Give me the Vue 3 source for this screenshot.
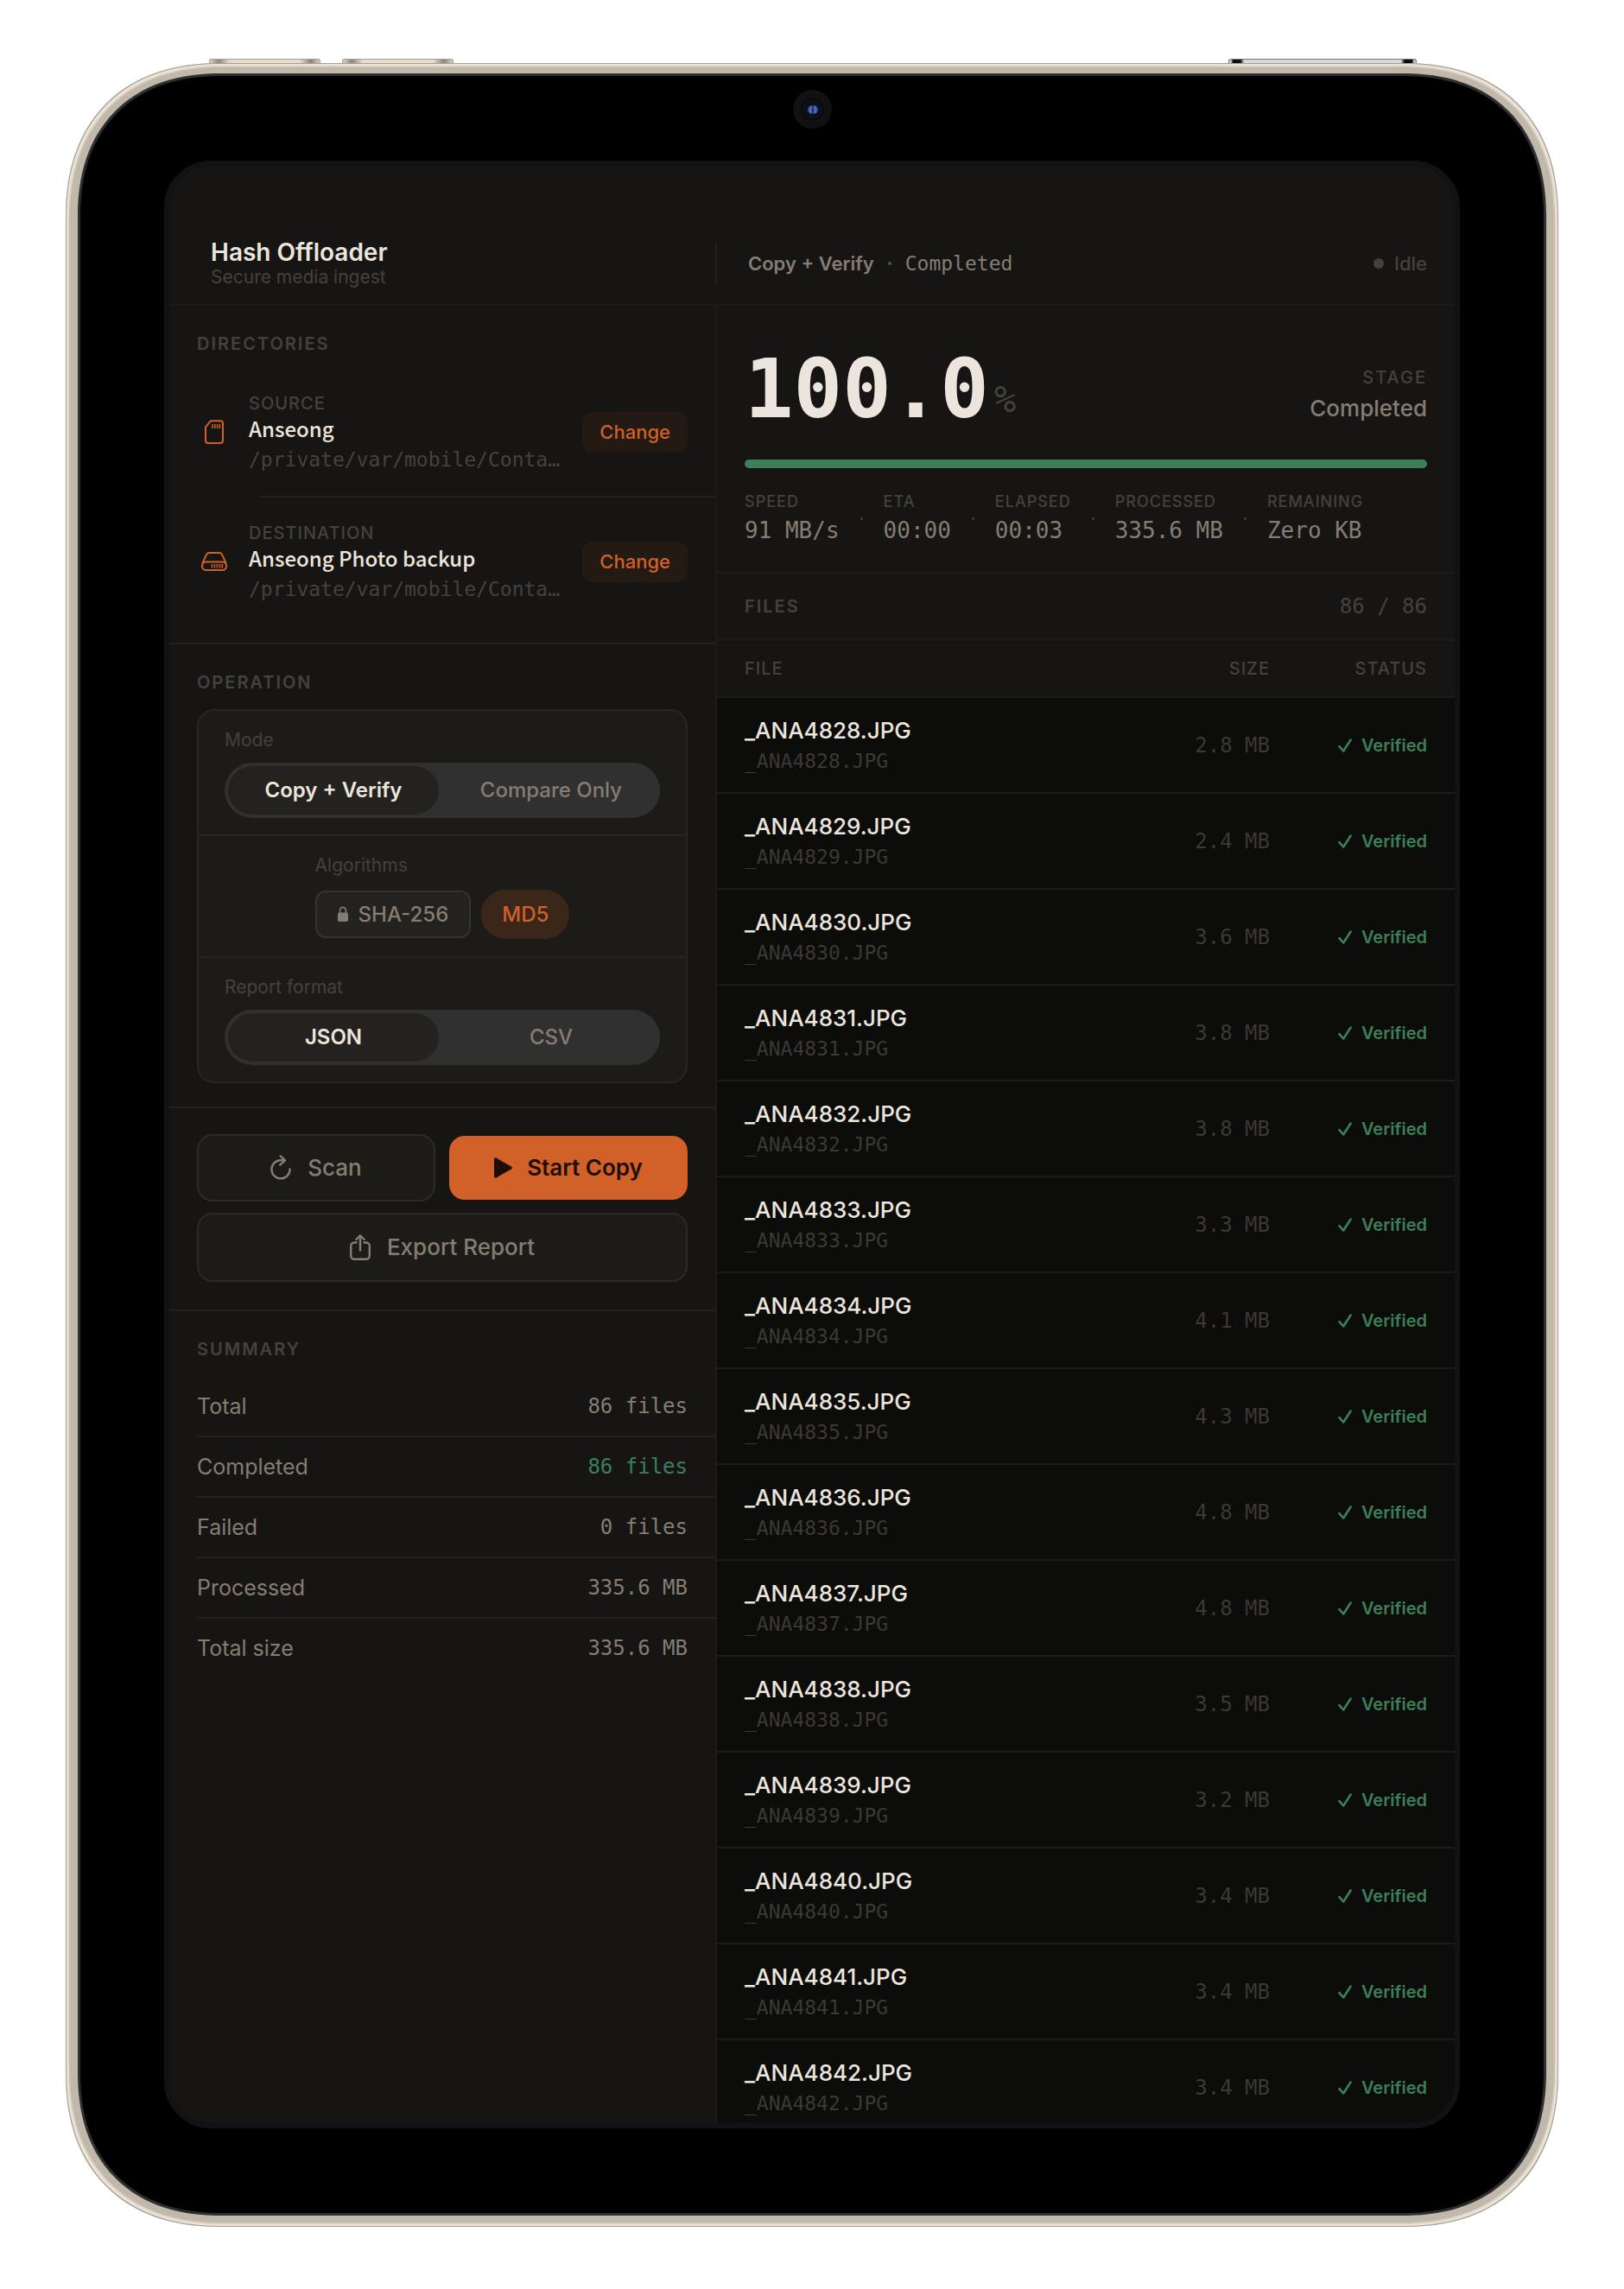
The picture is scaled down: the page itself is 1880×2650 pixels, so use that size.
<script setup>
import { ref } from 'vue'

const directories = [
  { id: 'source', label: 'SOURCE', name: 'Anseong', path: '/private/var/mobile/Conta…', icon: 'card' },
  { id: 'destination', label: 'DESTINATION', name: 'Anseong Photo backup', path: '/private/var/mobile/Conta…', icon: 'drive' },
]

const mode = ref('Copy + Verify')
const format = ref('JSON')
const md5 = ref(true)

const summary = [
  { label: 'Total', value: '86 files' },
  { label: 'Completed', value: '86 files', good: true },
  { label: 'Failed', value: '0 files' },
  { label: 'Processed', value: '335.6 MB' },
  { label: 'Total size', value: '335.6 MB' },
]

const progress = 100

const stats = [
  { label: 'SPEED', value: '91 MB/s' },
  { label: 'ETA', value: '00:00' },
  { label: 'ELAPSED', value: '00:03' },
  { label: 'PROCESSED', value: '335.6 MB' },
  { label: 'REMAINING', value: 'Zero KB' },
]

const sizes = ['2.8', '2.4', '3.6', '3.8', '3.8', '3.3', '4.1', '4.3', '4.8', '4.8', '3.5', '3.2', '3.4', '3.4', '3.4']
const files = sizes.map((size, i) => ({ name: `_ANA${4828 + i}.JPG`, size: `${size} MB` }))
</script>

<template>
  <div class="page">
    <div class="device">
      <span class="key key-up"></span>
      <span class="key key-down"></span>
      <span class="key key-power"></span>
      <div class="bezel">
        <span class="camera"><span class="lens"></span></span>
        <div class="screen">
          <header class="topbar">
            <div class="brand">
              <div>
                <h1>Hash Offloader</h1>
                <p>Secure media ingest</p>
              </div>
              <span class="rule"></span>
            </div>
            <div class="session">
              <strong>Copy + Verify</strong>
              <span class="speck"></span>
              <span class="mono small">Completed</span>
              <span class="state"><span class="bulb"></span>Idle</span>
            </div>
          </header>

          <div class="body">
            <aside class="sidebar">
              <section class="directories">
                <h2>DIRECTORIES</h2>
                <div v-for="dir in directories" :key="dir.id" class="directory">
                  <span class="dir-icon">
                    <svg v-if="dir.icon === 'card'" width="22" height="28" viewBox="0 0 22 28" fill="none" stroke="currentColor" stroke-width="2" stroke-linejoin="round">
                      <path d="M8.2 1.2H18a3 3 0 0 1 3 3V24a3 3 0 0 1-3 3H4a3 3 0 0 1-3-3V9.4a3 3 0 0 1 .9-2.1l4.2-5.2a3 3 0 0 1 2.100-.9Z" />
                      <path stroke-width="1.500" d="M9 5v5M11.800 5v5M14.600 5v5M17.400 5v5" />
                    </svg>
                    <svg v-else width="30" height="22" viewBox="0 0 30 22" fill="none" stroke="currentColor" stroke-width="2" stroke-linejoin="round">
                      <path d="M1.400 13.200 5.800 3.400A4 4 0 0 1 9.400 1H20.600a4 4 0 0 1 3.600 2.400l4.400 9.800" />
                      <rect x="1" y="11.500" width="28" height="9.500" rx="4.500" />
                      <path stroke-width="1.500" d="M12.500 14v4.500M15.500 14v4.500M18.500 14v4.500M21.500 14v4.500M24.300 14v4.500" />
                    </svg>
                  </span>
                  <div class="dir-text">
                    <span class="dir-label">{{ dir.label }}</span>
                    <span class="dir-name">{{ dir.name }}</span>
                    <span class="dir-path mono small">{{ dir.path }}</span>
                  </div>
                  <button type="button" class="change">Change</button>
                </div>
              </section>

              <section class="operation">
                <h2>OPERATION</h2>
                <div class="card">
                  <fieldset class="option">
                    <legend>Mode</legend>
                    <div class="segments">
                      <label v-for="m in ['Copy + Verify', 'Compare Only']" :key="m" :class="{ on: mode === m }">
                        <input v-model="mode" type="radio" name="mode" :value="m" />{{ m }}
                      </label>
                    </div>
                  </fieldset>
                  <div class="option algorithms">
                    <div>
                      <span class="option-label">Algorithms</span>
                      <div class="chips">
                        <span class="chip locked">
                          <svg width="12" height="18" viewBox="0 0 12 18">
                            <path d="M2.600 8V4.800a3.400 3.400 0 0 1 6.800 0V8" fill="none" stroke="currentColor" stroke-width="1.600" />
                            <rect x="0" y="7.500" width="12" height="10.500" rx="2" fill="currentColor" />
                          </svg>
                          SHA-256
                        </span>
                        <button type="button" class="chip pill" :aria-pressed="md5" @click="md5 = !md5">MD5</button>
                      </div>
                    </div>
                  </div>
                  <fieldset class="option">
                    <legend>Report format</legend>
                    <div class="segments">
                      <label v-for="f in ['JSON', 'CSV']" :key="f" :class="{ on: format === f }">
                        <input v-model="format" type="radio" name="format" :value="f" />{{ f }}
                      </label>
                    </div>
                  </fieldset>
                </div>
              </section>

              <section class="actions">
                <div class="pair">
                  <button type="button" class="action scan">
                    <svg width="24" height="30" viewBox="0 0 24 30" fill="none" stroke="currentColor" stroke-width="2.400" stroke-linecap="round" stroke-linejoin="round">
                      <path d="M22.600 16.500A10.600 10.600 0 1 1 12 6.200h4.600" />
                      <path d="m11.800 1.400 5.200 4.900-5.800 5.400" />
                    </svg>
                    Scan
                  </button>
                  <button type="button" class="action start">
                    <svg width="21" height="24" viewBox="0 0 21 24" fill="currentColor">
                      <path d="M0 2.200C0 .6 1.400-.1 2.800.7l17 9.800c1.500.9 1.500 2.100 0 3l-17 9.800C1.400 24.100 0 23.400 0 21.800Z" />
                    </svg>
                    Start Copy
                  </button>
                </div>
                <button type="button" class="action export">
                  <svg width="24" height="30" viewBox="0 0 24 30" fill="none" stroke="currentColor" stroke-width="2.400" stroke-linecap="round" stroke-linejoin="round">
                    <path d="M7.500 9.500H5.200a4 4 0 0 0-4 4v11.300a4 4 0 0 0 4 4h13.600a4 4 0 0 0 4-4V13.500a4 4 0 0 0-4-4h-2.300" />
                    <path d="M12 18.500V1.800M7.400 6 12 1.400 16.600 6" />
                  </svg>
                  Export Report
                </button>
              </section>

              <section class="summary">
                <h2>SUMMARY</h2>
                <dl>
                  <div v-for="row in summary" :key="row.label">
                    <dt>{{ row.label }}</dt>
                    <dd class="mono" :class="{ good: row.good }">{{ row.value }}</dd>
                  </div>
                </dl>
              </section>
            </aside>

            <main class="main">
              <section class="status">
                <div class="hero">
                  <p class="percent mono">{{ progress.toFixed(1) }}<span>%</span></p>
                  <div class="stage">
                    <span class="stage-label">STAGE</span>
                    <span class="stage-value">Completed</span>
                  </div>
                </div>
                <progress :value="progress" max="100" aria-label="Copy progress"></progress>
                <div class="stats">
                  <template v-for="(stat, i) in stats" :key="stat.label">
                    <span v-if="i" class="tick"></span>
                    <div>
                      <span class="stat-label">{{ stat.label }}</span>
                      <span class="stat-value mono">{{ stat.value }}</span>
                    </div>
                  </template>
                </div>
              </section>

              <div class="files-bar">
                <h2>FILES</h2>
                <span class="mono">86 / 86</span>
              </div>

              <div class="files">
                <table>
                  <thead>
                    <tr>
                      <th scope="col">FILE</th>
                      <th scope="col" class="size">SIZE</th>
                      <th scope="col" class="result">STATUS</th>
                    </tr>
                  </thead>
                  <tbody>
                    <tr v-for="file in files" :key="file.name">
                      <td>
                        <span class="file-name">{{ file.name }}</span>
                        <span class="file-path mono small">{{ file.name }}</span>
                      </td>
                      <td class="size mono">{{ file.size }}</td>
                      <td class="result">
                        <span class="verified">
                          <svg width="16" height="16" viewBox="0 0 16 16" fill="none" stroke="currentColor" stroke-width="2.600" stroke-linecap="round" stroke-linejoin="round">
                            <path d="m1.400 9.200 4.800 5.300L14.600 1.500" />
                          </svg>
                          Verified
                        </span>
                      </td>
                    </tr>
                  </tbody>
                </table>
              </div>
            </main>
          </div>
        </div>
      </div>
    </div>
  </div>
</template>

<style>
body {
  background: #fff;
}
</style>

<style scoped>
* {
  box-sizing: border-box;
}

h1,
h2,
p,
dl,
dd,
fieldset,
legend {
  margin: 0;
  padding: 0;
  border: 0;
}

button {
  border: 0;
  font: inherit;
  cursor: pointer;
}

.page {
  padding: 73px 76px 72px;
  font-family: Inter, "Liberation Sans", sans-serif;
  color: #ece5dd;
}

.mono {
  font-family: "DejaVu Sans Mono", "Liberation Mono", monospace;
  font-size: 24px;
}

.small {
  font-size: 23px;
}

/* Device shell */
.device {
  position: relative;
  padding: 12px 14px 13px;
  border-radius: 162px;
  background: #c1b8aa;
  box-shadow:
    inset 0 0 0 1px #a79f92,
    inset 0 0 2px 4px #ebe3d8;
}

.bezel {
  position: relative;
  padding: 98px 97px;
  border: 3px solid #2c2e2f;
  border-radius: 148px;
  background: #000;
}

@supports (corner-shape: superellipse(1.2)) {
  .device {
    border-radius: 180px;
    corner-shape: superellipse(1.2);
  }

  .bezel {
    border-radius: 167px;
    corner-shape: superellipse(1.2);
  }
}

.key {
  position: absolute;
  top: -5px;
  width: 129px;
  height: 5px;
  border: 1px solid #a79f92;
  border-bottom: 0;
  border-radius: 3px 3px 0 0;
  background: linear-gradient(90deg, #d9d1c4, #8d8578 8%, #e6ddcf 18%, #e6ddcf 82%, #8d8578 92%, #d9d1c4);
}

.key-up {
  left: 166px;
}

.key-down {
  left: 320px;
}

.key-power {
  right: 164px;
  width: 218px;
  border-color: #77787a;
  background: linear-gradient(90deg, #ccc 1%, #0c0f12 2%, #0c0f12 6%, #dcdad8 8%, #dcdad8 92%, #0c0f12 94%, #0c0f12 98%, #ccc 99%);
}

.camera {
  position: absolute;
  top: 16px;
  left: 50%;
  display: grid;
  place-items: center;
  width: 45px;
  height: 45px;
  margin-left: -22px;
  border-radius: 50%;
  background: radial-gradient(circle, #0a0d14 0, #0b111b 11px, #05070a 12px, #111 14px);
}

.lens {
  width: 12px;
  height: 10px;
  border-radius: 50%;
  background: linear-gradient(90deg, #2c3f8f, #5573c4 30%, #1d2557 50%, #5573c4 70%, #2c3f8f);
}

.screen {
  display: flex;
  flex-direction: column;
  box-sizing: content-box;
  aspect-ratio: 744 / 1133;
  min-height: 0;
  border: 6px solid #111213;
  border-radius: 54px;
  background: #161513;
  overflow: hidden;
}

/* Top bar */
.topbar,
.body {
  display: grid;
  grid-template-columns: minmax(0, 634fr) minmax(0, 854fr);
}

.topbar {
  flex: none;
  align-items: center;
  padding: 84px 0 18px;
  border-bottom: 2px solid #1c1b19;
}

.brand {
  display: flex;
  align-items: center;
  justify-content: space-between;
  padding-left: 48px;
}

h1 {
  font-size: 28px;
  font-weight: 600;
  line-height: 32px;
}

.brand p {
  font-size: 21px;
  line-height: 26px;
  color: #45423c;
}

.rule {
  width: 2px;
  height: 48px;
  background: #22211f;
}

.session {
  display: flex;
  align-items: center;
  gap: 16px;
  padding: 0 32px 0 36px;
  color: #857d73;
}

.session strong {
  font-size: 22px;
  font-weight: 600;
}

.speck {
  width: 4px;
  height: 4px;
  border-radius: 50%;
  background: #57534c;
}

.state {
  display: flex;
  align-items: center;
  gap: 12px;
  margin-left: auto;
  font-size: 22px;
  font-weight: 500;
  color: #45423c;
}

.bulb {
  width: 12px;
  height: 12px;
  border-radius: 50%;
  background: #45423c;
}

.body {
  flex: 1;
  min-height: 0;
}

/* Sidebar */
.sidebar {
  min-width: 0;
  border-right: 2px solid #1c1b19;
}

.sidebar section {
  padding: 32px 32px 0;
  border-bottom: 2px solid #22211f;
}

.sidebar section.summary {
  border-bottom: 0;
}

h2 {
  font-size: 20px;
  font-weight: 600;
  line-height: 24px;
  letter-spacing: 2px;
  color: #45423c;
}

.sidebar section.directories {
  padding-bottom: 20px;
}

.directories h2 {
  margin-bottom: 16px;
}

.directory {
  display: flex;
  align-items: center;
  height: 148px;
}

.directory + .directory {
  position: relative;
  height: 150px;
  padding-top: 2px;
}

.directory + .directory::before {
  content: "";
  position: absolute;
  top: 0;
  left: 72px;
  right: -32px;
  height: 2px;
  background: #22211f;
}

.dir-icon {
  display: grid;
  place-items: center;
  width: 40px;
  color: #d16029;
}

.dir-text {
  flex: 1;
  display: flex;
  flex-direction: column;
  min-width: 0;
  padding: 0 12px 2px 20px;
}

.dir-label {
  font-size: 20px;
  font-weight: 500;
  line-height: 28px;
  letter-spacing: 1px;
  color: #45423c;
}

.dir-name {
  margin-bottom: 7px;
  font-family: "Noto Sans CJK KR", "Noto Sans", sans-serif;
  font-size: 24px;
  font-weight: 500;
  line-height: 30px;
}

.dir-path {
  line-height: 28px;
  white-space: nowrap;
  overflow: hidden;
  text-overflow: ellipsis;
  color: #45423c;
}

.change {
  padding: 0 20px;
  border-radius: 12px;
  background: #231a14;
  font-size: 22px;
  font-weight: 500;
  line-height: 47px;
  color: #d16029;
}

/* Operation card */
.sidebar section.operation {
  padding-bottom: 27px;
}

.card {
  margin-top: 19px;
  border: 2px solid #272622;
  border-radius: 20px;
  background: #1d1b17;
}

.option {
  min-width: 0;
  padding: 22px 30px 19px;
}

.option + .option {
  border-top: 2px solid #272622;
}

.option legend,
.option-label {
  display: block;
  float: left;
  width: 100%;
  margin-bottom: 14px;
  font-size: 21px;
  line-height: 24px;
  color: #45423c;
}

.segments {
  clear: both;
  display: flex;
  gap: 8px;
  padding: 4px;
  border-radius: 32px;
  background: #303030;
}

.segments label {
  flex: 1;
  border-radius: 28px;
  font-size: 24px;
  font-weight: 500;
  line-height: 56px;
  text-align: center;
  color: #857d73;
  cursor: pointer;
}

.segments label.on {
  background: #24221e;
  font-weight: 600;
  color: #ece5dd;
}

.segments input {
  position: absolute;
  opacity: 0;
  pointer-events: none;
}

.algorithms {
  display: flex;
  justify-content: center;
}

.chips {
  clear: both;
  display: flex;
  align-items: center;
  gap: 12px;
  min-height: 60px;
}

.chip {
  display: flex;
  align-items: center;
  gap: 12px;
  padding: 0 24px;
  font-size: 24px;
  font-weight: 500;
  line-height: 51px;
}

.locked {
  border: 2px solid #343330;
  border-radius: 12px;
  background: #24221e;
  color: #857d73;
}

.pill {
  border-radius: 28px;
  background: #3b261a;
  line-height: 57px;
  color: #d16029;
}

/* Actions */
.sidebar section.actions {
  padding: 30px 32px 32px;
}

.pair {
  display: grid;
  grid-template-columns: 1fr 1fr;
  align-items: center;
  gap: 16px;
  margin-bottom: 13px;
}

.action {
  display: flex;
  align-items: center;
  justify-content: center;
  gap: 19px;
  width: 100%;
  border: 2px solid #2b2a28;
  border-radius: 18px;
  background: #1d1b17;
  font-size: 26px;
  font-weight: 500;
  line-height: 72px;
  color: #857d73;
}

.start {
  gap: 17px;
  border: 0;
  background: #d16029;
  font-weight: 600;
  color: #1d0f07;
}

.export {
  line-height: 74px;
}

/* Summary */
.summary dl {
  margin: 20px -32px 0 0;
}

.summary dl div {
  display: flex;
  align-items: center;
  justify-content: space-between;
  height: 68px;
  padding-right: 32px;
}

.summary dl div + div {
  height: 70px;
  border-top: 2px solid #22211f;
}

.summary dt {
  font-size: 25px;
  color: #857d73;
}

.summary dd {
  color: #857d73;
}

.summary dd.good {
  color: #3d7f58;
}

/* Main pane */
.main {
  display: flex;
  flex-direction: column;
  min-width: 0;
  min-height: 0;
}

.status {
  padding: 57px 32px 32px;
}

.hero {
  display: flex;
  align-items: center;
  justify-content: space-between;
  margin-bottom: 41px;
}

.percent {
  display: flex;
  align-items: center;
  gap: 6px;
  font-size: 94px;
  font-weight: 700;
  line-height: 80px;
}

.percent span {
  padding-top: 24px;
  font-size: 42px;
  font-weight: 400;
  line-height: 56px;
  color: #45423c;
}

.stage {
  display: flex;
  flex-direction: column;
  align-items: flex-end;
  padding-top: 8px;
}

.stage-label {
  font-size: 20px;
  font-weight: 500;
  line-height: 36px;
  letter-spacing: 2px;
  color: #45423c;
}

.stage-value {
  font-size: 26px;
  font-weight: 500;
  line-height: 36px;
  color: #857d73;
}

progress {
  display: block;
  width: 100%;
  height: 10px;
  margin-bottom: 28px;
  border: 0;
  border-radius: 5px;
  background: #22211f;
  overflow: hidden;
  appearance: none;
}

progress::-webkit-progress-bar {
  background: #22211f;
}

progress::-webkit-progress-value {
  background: #3d7f58;
}

.stats {
  display: flex;
  align-items: center;
  gap: 24px;
}

.stats div {
  display: flex;
  flex-direction: column;
  gap: 6px;
}

.tick {
  width: 3px;
  height: 3px;
  border-radius: 50%;
  background: #45423c;
}

.stat-label {
  font-size: 18px;
  font-weight: 500;
  line-height: 22px;
  letter-spacing: 1px;
  color: #45423c;
}

.stat-value {
  font-size: 26px;
  line-height: 32px;
  color: #857d73;
}

.files-bar {
  display: flex;
  align-items: center;
  justify-content: space-between;
  height: 80px;
  flex: none;
  padding: 0 32px;
  border: solid #1c1b19;
  border-width: 2px 0;
  color: #45423c;
}

.files {
  flex: 1;
  min-height: 0;
  background: #0c0c0a;
  overflow: hidden;
}

table {
  width: 100%;
  border-spacing: 0;
}

th {
  height: 66px;
  padding: 0 0 0 32px;
  border-bottom: 2px solid #1c1b19;
  background: #161513;
  font-size: 20px;
  font-weight: 500;
  letter-spacing: 1px;
  text-align: left;
  color: #45423c;
}

td {
  height: 111px;
  padding: 0 0 0 32px;
  border-bottom: 2px solid #1c1b19;
}

.size {
  width: 180px;
  text-align: right;
}

td.size {
  color: #3c3833;
}

.result {
  width: 214px;
  padding-right: 32px;
  text-align: right;
}

.file-name,
.file-path {
  display: block;
}

.file-name {
  font-size: 26px;
  font-weight: 500;
  line-height: 36px;
}

.file-path {
  line-height: 34px;
  color: #3c3833;
}

.verified {
  display: flex;
  align-items: center;
  justify-content: flex-end;
  gap: 11px;
  font-size: 20px;
  font-weight: 600;
  color: #3d7f58;
}
</style>
